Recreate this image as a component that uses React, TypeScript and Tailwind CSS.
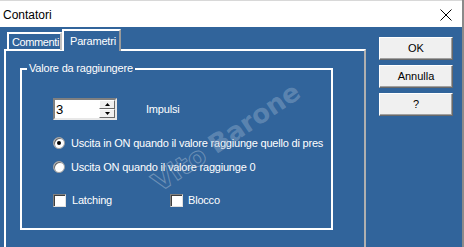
import React from "react";

const font = { fontFamily: '"Liberation Sans", Arial, sans-serif' };

function Btn({ children }: { children: React.ReactNode }) {
  return (
    <div className="w-[74px] h-[23px] bg-[#f0f0f0] border border-t-white border-l-white border-r-[#696969] border-b-[#696969] shadow-[inset_-1px_-1px_0_#a0a0a0] flex items-center justify-center text-[11px] text-black">
      {children}
    </div>
  );
}

function Radio({ checked }: { checked?: boolean }) {
  return (
    <div className="w-[12px] h-[12px] shrink-0 rounded-full bg-white border border-[#a0a0a0] flex items-center justify-center shadow-[inset_1px_1px_0_#696969]">
      {checked && <div className="w-[4px] h-[4px] rounded-full bg-black" />}
    </div>
  );
}

function Check() {
  return <div className="w-[13px] h-[13px] shrink-0 bg-white border border-t-[#808080] border-l-[#808080] border-r-[#e0e0e0] border-b-[#e0e0e0] shadow-[inset_1px_1px_0_#404040]" />;
}

export default function App() {
  return (
    <div style={font} className="w-[464px] h-[247px] bg-[#31649b] border-r-2 border-[#8a8a8a] overflow-hidden relative text-white text-[11px] leading-none whitespace-nowrap tracking-[-0.2px]">
      {/* title bar */}
      <div className="h-[27px] bg-white border-t border-[#d8d8d8] flex items-center justify-between pl-[3px] pr-[10px] text-black tracking-normal">
        <span className="text-[12px] mt-[1px]">Contatori</span>
        <svg width="12" height="12" viewBox="0 0 12 12" className="mt-[2px]">
          <path d="M0.5 0.5 L11.5 11.5 M11.5 0.5 L0.5 11.5" stroke="#000" strokeWidth="1" />
        </svg>
      </div>

      <div className="flex">
        {/* tab control */}
        <div className="ml-[4px] w-[362px] flex flex-col">
          <div className="h-[22px] flex items-end pl-[3px] relative z-10">
            <div className="w-[55px] h-[18px] border-t-2 border-l-2 border-r-2 border-t-white border-l-white border-r-[#c0c0c0] flex items-center pl-[3px] mb-[-1px] tracking-[-0.4px]">
              Commenti
            </div>
            <div className="w-[59px] h-[22px] border-t-2 border-l-2 border-r-2 border-t-white border-l-white border-r-[#9a9a9a] bg-[#31649b] flex items-center pl-[6px] mb-[-2px]">
              Parametri
            </div>
          </div>
          <div className="h-[200px] border-t-2 border-l-2 border-r-2 border-t-white border-l-white border-r-[#b0b0b0] pt-[17px] pl-[14px]">
            {/* group box */}
            <div className="relative w-[313px] h-[162px] border-2 border-white">
              <div className="absolute -top-[7px] left-[5px] px-[2px] bg-[#31649b]">Valore da raggiungere</div>
              <div className="pt-[28px] pl-[31px] flex flex-col">
                <div className="flex items-center">
                  <div className="w-[64px] h-[22px] flex bg-white border-2 border-t-[#808080] border-l-[#808080] border-r-[#e8e8e8] border-b-[#e8e8e8]">
                    <div className="flex-1 text-black text-[13px] flex items-center pl-[1px]">3</div>
                    <div className="w-[16px] flex flex-col">
                      <div className="flex-1 bg-[#f0f0f0] border border-t-white border-l-white border-r-[#696969] border-b-[#696969] flex items-center justify-center">
                        <svg width="5" height="3" viewBox="0 0 5 3"><path d="M2.5 0 L5 3 L0 3Z" fill="#000" /></svg>
                      </div>
                      <div className="flex-1 bg-[#f0f0f0] border border-t-white border-l-white border-r-[#696969] border-b-[#696969] flex items-center justify-center">
                        <svg width="5" height="3" viewBox="0 0 5 3"><path d="M0 0 L5 0 L2.5 3Z" fill="#000" /></svg>
                      </div>
                    </div>
                  </div>
                  <span className="ml-[29px]">Impulsi</span>
                </div>
                <div className="flex items-center mt-[17px] h-[12px]">
                  <Radio checked />
                  <span className="ml-[6px]">Uscita in ON quando il valore raggiunge quello di pres</span>
                </div>
                <div className="flex items-center mt-[12px] h-[12px]">
                  <Radio />
                  <span className="ml-[6px]">Uscita ON quando il valore raggiunge 0</span>
                </div>
                <div className="flex items-center mt-[21px]">
                  <div className="flex items-center w-[117px]">
                    <Check />
                    <span className="ml-[6px]">Latching</span>
                  </div>
                  <Check />
                  <span className="ml-[5px]">Blocco</span>
                </div>
              </div>
            </div>
          </div>
        </div>

        {/* buttons */}
        <div className="ml-[13px] mt-[10px] flex flex-col gap-[5px] tracking-normal">
          <Btn>OK</Btn>
          <Btn>Annulla</Btn>
          <Btn>?</Btn>
        </div>
      </div>

      {/* watermark */}
      <div
        className="absolute left-[140px] top-[124px] rotate-[-34deg] text-[26px] font-bold whitespace-nowrap pointer-events-none tracking-normal"
        style={{ fontFamily: '"DejaVu Sans", sans-serif' }}
      >
        <span className="text-transparent [-webkit-text-stroke:1px_rgba(170,190,210,0.5)]">Vito </span>
        <span className="text-[rgba(160,185,210,0.4)]">Barone</span>
      </div>
    </div>
  );
}
